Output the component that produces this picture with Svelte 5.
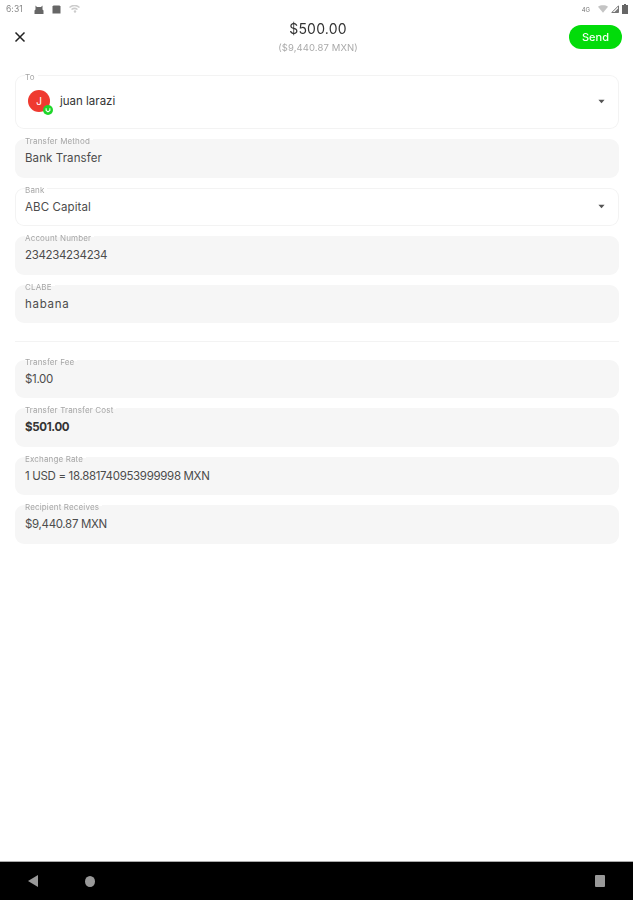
<script lang="ts">
	// Send-money review screen: read-only recipient and transfer fields
	const transferFields = [
		{ label: 'Transfer Method', value: 'Bank Transfer' },
		{ label: 'Bank', value: 'ABC Capital', select: true },
		{ label: 'Account Number', value: '234234234234', numeric: true },
		{ label: 'CLABE', value: 'habana', wide: true }
	];
	const costFields = [
		{ label: 'Transfer Fee', value: '$1.00', numeric: true },
		{ label: 'Transfer Transfer Cost', value: '$501.00', strong: true, numeric: true },
		{ label: 'Exchange Rate', value: '1 USD = 18.881740953999998 MXN', numeric: true },
		{ label: 'Recipient Receives', value: '$9,440.87 MXN', numeric: true }
	];
</script>

{#snippet caret()}
	<svg class="caret" viewBox="0 0 8 5" width="7" height="5" aria-hidden="true">
		<path fill="currentColor" d="M0.5 0.5h7L4 4.5z" />
	</svg>
{/snippet}

{#snippet field(f: { label: string; value: string; select?: boolean; strong?: boolean; numeric?: boolean; wide?: boolean })}
	<div class="field" class:select={f.select}>
		<span class="label">{f.label}</span>
		<span class="value" class:strong={f.strong} class:numeric={f.numeric} class:wide={f.wide}>{f.value}</span>
		{#if f.select}{@render caret()}{/if}
	</div>
{/snippet}

<div class="screen">
	<div class="status">
		<div class="status-left">
			<span class="time">6:31</span>
			<svg viewBox="0 0 10 9" width="10" height="9" aria-hidden="true">
				<path fill="#666" d="M1.5 0.5l1.5 1.500h4l1.5-1.500v4l1 1v3.500h-9v-3.500l1-1z" />
			</svg>
			<svg viewBox="0 0 9 9" width="9" height="9" aria-hidden="true">
				<path fill="#666" d="M1.500 0.500h6l1 1v7h-8v-7z" />
			</svg>
			<svg viewBox="0 0 11 8" width="11" height="8" aria-hidden="true">
				<path fill="none" stroke="#ccc" stroke-width="1.500" d="M0.500 2.500c3-2.500 7-2.500 10 0M2.500 4.500c2-1.500 4-1.500 6 0" />
				<circle cx="6" cy="6.500" r="1.200" fill="#ccc" />
			</svg>
		</div>
		<div class="status-right">
			<span class="net">4G</span>
			<svg viewBox="0 0 11 8" width="10" height="8" aria-hidden="true">
				<path fill="#c4c4c4" d="M0 1.500c3-2 8-2 11 0L5.500 8z" />
			</svg>
			<svg viewBox="0 0 8 8" width="8" height="8" aria-hidden="true">
				<path fill="none" stroke="#777" d="M7.500 0.800v6.700h-6.700z" />
				<path fill="#777" d="M7.500 3v4.500h-4.500z" />
			</svg>
			<svg viewBox="0 0 6 10" width="6" height="10" aria-hidden="true">
				<path fill="#666" d="M2 0h2v1h2v9h-6v-9h2z" />
			</svg>
		</div>
	</div>

	<header class="topbar">
		<button type="button" class="close" aria-label="Close">
			<svg viewBox="0 0 12 12" width="12" height="12" aria-hidden="true">
				<path fill="none" stroke="#222" stroke-width="1.500" d="M1.500 1.500l9 9M10.500 1.500l-9 9" />
			</svg>
		</button>
		<div class="amount">
			<div class="usd">$500.00</div>
			<div class="mxn">($9,440.87 MXN)</div>
		</div>
		<button type="button" class="send">Send</button>
	</header>

	<main class="form">
		<div class="field recipient select">
			<span class="label">To</span>
			<div class="avatar">
				J
				<span class="badge">
					<svg viewBox="0 0 8 8" width="6" height="6" aria-hidden="true">
						<path fill="none" stroke="#fff" stroke-width="1.400" d="M1.500 1.500v3l2.500 2 2.500-2v-3" />
					</svg>
				</span>
			</div>
			<span class="name">juan larazi</span>
			{@render caret()}
		</div>

		{#each transferFields as f}
			{@render field(f)}
		{/each}

		<hr class="divider" />

		{#each costFields as f}
			{@render field(f)}
		{/each}
	</main>

	<nav class="navbar">
		<svg class="nav-back" viewBox="0 0 10 12" width="10" height="12" aria-hidden="true">
			<path fill="#999" d="M0 6L10 0v12z" />
		</svg>
		<span class="nav-home"></span>
		<span class="nav-recent"></span>
	</nav>
</div>

<style>
	:global(body) {
		background: #fff;
	}
	.screen {
		display: flex;
		flex-direction: column;
		height: 900px;
		font-family: Inter, "Liberation Sans", sans-serif;
		color: #333;
		filter: blur(0.45px);
	}
	.status {
		display: flex;
		justify-content: space-between;
		align-items: center;
		height: 18px;
		padding: 0 5px 0 6px;
	}
	.status-left,
	.status-right {
		display: flex;
		align-items: center;
	}
	.status-left {
		gap: 8px;
	}
	.status-right {
		gap: 3px;
	}
	.time {
		font-size: 8.500px;
		color: #888;
		margin-right: 3px;
		letter-spacing: 0.1px;
	}
	.net {
		font-size: 6px;
		color: #777;
		margin-right: 5px;
	}
	.topbar {
		display: grid;
		grid-template-columns: 1fr auto 1fr;
		align-items: start;
		height: 56px;
		padding: 1px 11px 0 14px;
	}
	.close {
		border: 0;
		background: transparent;
		padding: 0;
		margin-top: 12px;
		width: 12px;
		height: 12px;
		display: flex;
	}
	.amount {
		text-align: center;
	}
	.usd {
		font-size: 14px;
		line-height: 20px;
		color: #333;
		letter-spacing: 0.2px;
	}
	.mxn {
		font-size: 9.500px;
		line-height: 16px;
		margin-top: 1px;
		color: #aaa;
		letter-spacing: 0.1px;
	}
	.send {
		justify-self: end;
		width: 53px;
		height: 24px;
		margin-top: 6px;
		border: 0;
		border-radius: 12px;
		background: #02dc0a;
		color: #f2fff2;
		font-family: inherit;
		font-size: 11px;
		font-weight: 500;
		padding: 0;
	}
	.form {
		flex: 1;
		display: flex;
		flex-direction: column;
		gap: 10px;
		padding: 0 14px 0 15px;
	}
	.field {
		position: relative;
		display: flex;
		align-items: center;
		flex: none;
		height: 38.500px;
		padding: 0 10px;
		background: #f6f6f6;
		border-radius: 9px;
		box-sizing: border-box;
	}
	.field.select {
		background: #fff;
		box-shadow: inset 0 0 0 1px #f3f3f3;
		justify-content: space-between;
	}
	.label {
		position: absolute;
		top: -2px;
		left: 10px;
		font-size: 8px;
		line-height: 9px;
		color: #a6a6a6;
		padding-right: 3px;
		letter-spacing: 0.15px;
		background: linear-gradient(#fff 30%, transparent 30%);
	}
	.value {
		font-size: 11.500px;
		color: #4c4c4c;
		letter-spacing: 0.1px;
	}
	.value.numeric {
		letter-spacing: -0.33px;
	}
	.value.wide {
		letter-spacing: 0.7px;
	}
	.value.strong {
		font-weight: 700;
		color: #333;
	}
	.caret {
		color: #555;
		margin-right: 4px;
	}
	.recipient {
		height: 54px;
		padding-left: 13px;
		padding-bottom: 2px;
		justify-content: flex-start;
	}
	.recipient .caret {
		margin-left: auto;
	}
	.avatar {
		position: relative;
		display: flex;
		align-items: center;
		justify-content: center;
		width: 22px;
		height: 22px;
		border-radius: 50%;
		background: #ef3a30;
		color: #fff;
		font-size: 10px;
	}
	.badge {
		position: absolute;
		right: -3px;
		bottom: -3px;
		display: flex;
		align-items: center;
		justify-content: center;
		width: 10px;
		height: 10px;
		border-radius: 50%;
		background: #1fd62a;
	}
	.name {
		margin-left: 10px;
		font-size: 11.500px;
		color: #333;
	}
	.divider {
		flex: none;
		width: 100%;
		height: 1px;
		margin: 7.500px 0 8px;
		border: 0;
		background: #f3f3f3;
	}
	.navbar {
		position: relative;
		flex: none;
		display: flex;
		align-items: center;
		height: 38px;
		border-top: 1px solid #aaa;
		background: #000;
	}
	.nav-back {
		margin-left: 28px;
	}
	.nav-home {
		width: 10px;
		height: 11px;
		margin-left: 47px;
		border-radius: 50%;
		background: #999;
	}
	.nav-recent {
		width: 10px;
		height: 12px;
		margin-left: auto;
		margin-right: 28px;
		border-radius: 1px;
		background: #999;
	}
</style>
